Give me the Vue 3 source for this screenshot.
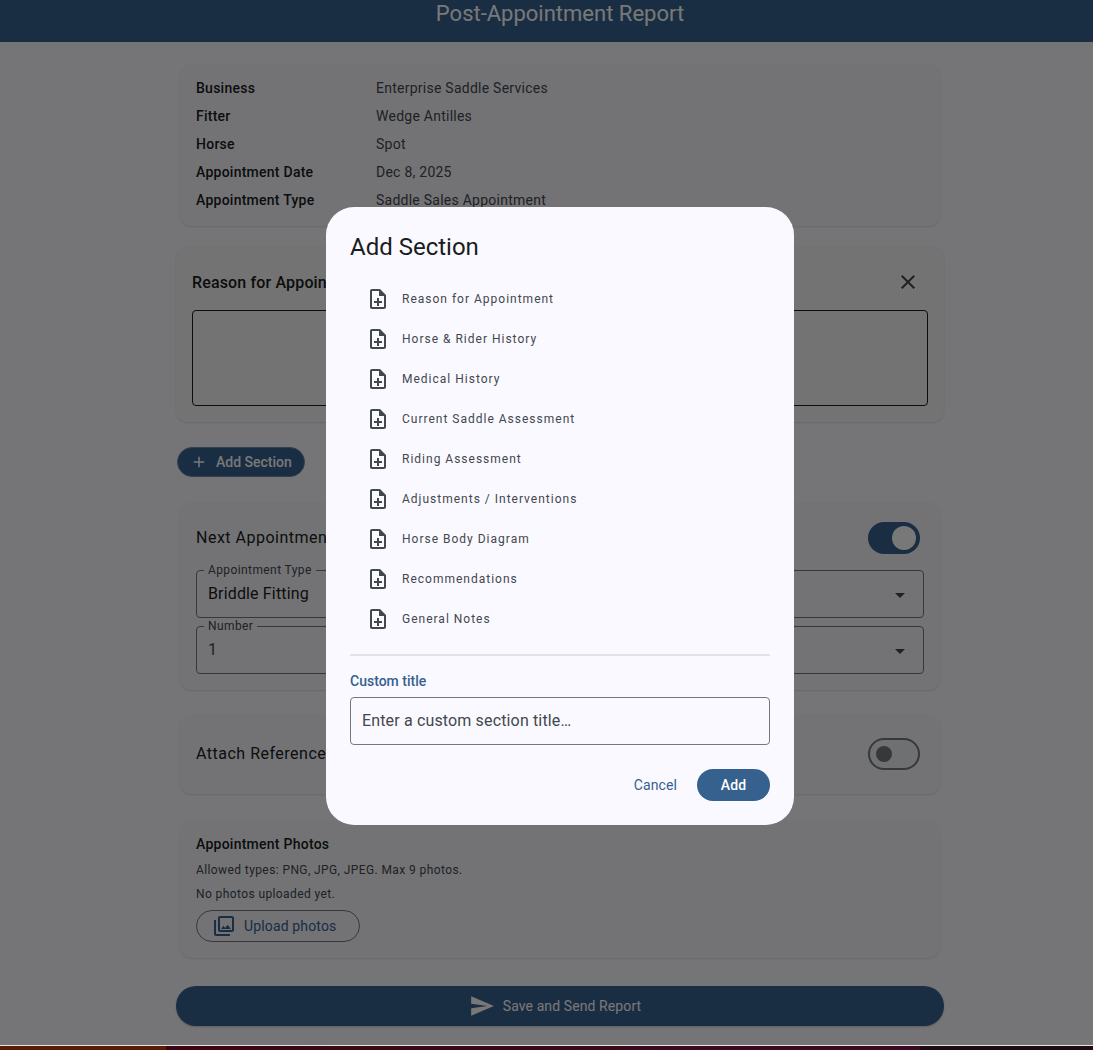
<script setup>
const info = [
  ['Business', 'Enterprise Saddle Services'],
  ['Fitter', 'Wedge Antilles'],
  ['Horse', 'Spot'],
  ['Appointment Date', 'Dec 8, 2025'],
  ['Appointment Type', 'Saddle Sales Appointment'],
]
const sections = [
  'Reason for Appointment',
  'Horse & Rider History',
  'Medical History',
  'Current Saddle Assessment',
  'Riding Assessment',
  'Adjustments / Interventions',
  'Horse Body Diagram',
  'Recommendations',
  'General Notes',
]
</script>

<template>
  <div class="page">
    <header class="bar">
      <h1>Post-Appointment Report</h1>
    </header>
    <main class="column">
      <section class="card info">
        <div v-for="row in info" :key="row[0]" class="info-row">
          <span class="info-key">{{ row[0] }}</span>
          <span class="info-val">{{ row[1] }}</span>
        </div>
      </section>

      <section class="note">
        <div class="note-head">
          <span class="note-title">Reason for Appointment</span>
          <svg class="close" viewBox="0 0 24 24"><path d="M19 6.41 17.59 5 12 10.59 6.41 5 5 6.41 10.59 12 5 17.59 6.41 19 12 13.41 17.59 19 19 17.59 13.41 12z" /></svg>
        </div>
        <div class="note-box"></div>
      </section>

      <button class="add-btn">
        <svg viewBox="0 0 24 24"><path d="M19 13h-6v6h-2v-6H5v-2h6V5h2v6h6v2z" /></svg>
        <span>Add Section</span>
      </button>

      <section class="card next">
        <div class="switch-row">
          <span class="row-title">Next Appointment</span>
          <span class="switch on"><i></i></span>
        </div>
        <div class="fields">
          <fieldset class="field"><legend>Appointment Type</legend><span>Briddle Fitting</span></fieldset>
          <fieldset class="field right"><legend>Unit</legend><svg viewBox="0 0 24 24"><path d="M7 10l5 5 5-5z" /></svg></fieldset>
          <fieldset class="field"><legend>Number</legend><span class="dim">1</span></fieldset>
          <fieldset class="field right"><legend>Period</legend><svg viewBox="0 0 24 24"><path d="M7 10l5 5 5-5z" /></svg></fieldset>
        </div>
      </section>

      <section class="card attach">
        <span class="row-title">Attach Reference</span>
        <span class="switch off"><i></i></span>
      </section>

      <section class="card photos">
        <h2>Appointment Photos</h2>
        <p>Allowed types: PNG, JPG, JPEG. Max 9 photos.</p>
        <p>No photos uploaded yet.</p>
        <button class="upload">
          <svg viewBox="0 0 24 24"><path d="M20 4v12H8V4h12m0-2H8c-1.1 0-2 .9-2 2v12c0 1.1.9 2 2 2h12c1.1 0 2-.9 2-2V4c0-1.1-.9-2-2-2zm-8.5 9.67 1.69 2.26 2.48-3.1L19 15H9zM2 6v14c0 1.1.9 2 2 2h14v-2H4V6H2z" /></svg>
          <span>Upload photos</span>
        </button>
      </section>

      <button class="send">
        <svg viewBox="0 0 24 24"><path d="M2.01 21 23 12 2.01 3 2 10l15 2-15 2z" /></svg>
        <span>Save and Send Report</span>
      </button>
    </main>

    <div class="scrim">
      <div class="dialog">
        <h3>Add Section</h3>
        <ul>
          <li v-for="s in sections" :key="s">
            <svg viewBox="0 0 24 24"><path d="M13 11h-2v3H8v2h3v3h2v-3h3v-2h-3zm1-9H6c-1.1 0-2 .9-2 2v16c0 1.1.89 2 1.99 2H18c1.1 0 2-.9 2-2V8l-6-6zm4 18H6V4h7v5h5v11z" /></svg>
            <span>{{ s }}</span>
          </li>
        </ul>
        <hr />
        <label>Custom title</label>
        <div class="input">Enter a custom section title…</div>
        <div class="actions">
          <button class="cancel">Cancel</button>
          <button class="confirm">Add</button>
        </div>
      </div>
    </div>
    <div class="strip"></div>
  </div>
</template>

<style>
html, body { margin: 0; overflow: hidden; background: #f8f9ff; }
</style>

<style scoped>
.page {
  position: relative;
  width: 1120px;
  height: 1050px;
  overflow: hidden;
  background: #f8f9ff;
  font-family: Roboto, "Liberation Sans", sans-serif;
  color: #191c20;
}
.bar {
  height: 42px;
  background: #36618e;
  color: #fff;
  text-align: center;
}
.bar h1 {
  margin: 0;
  font-size: 22px;
  font-weight: 400;
  line-height: 27px;
  color: #fff;
}
.column {
  width: 768px;
  margin: 0 auto;
  display: flex;
  flex-direction: column;
  align-items: stretch;
}
.card {
  margin: 0 4px;
  background: #f4f5fa;
  border-radius: 12px;
  box-shadow: 0 1px 2px rgba(0, 0, 0, .12);
  box-sizing: border-box;
  padding: 0 16px;
}
.info {
  margin-top: 22px;
  height: 162px;
  padding-top: 10px;
}
.info-row {
  display: flex;
  height: 28px;
  align-items: center;
  font-size: 14px;
  letter-spacing: .25px;
}
.info-key { width: 180px; font-weight: 500; }
.info-val { color: #43474e; }
.note {
  margin-top: 20px;
  height: 176px;
  padding: 16px;
  box-sizing: border-box;
  background: #f5f5f5;
  border-radius: 12px;
  box-shadow: 0 1px 2px rgba(0, 0, 0, .12);
}
.note-head {
  display: flex;
  justify-content: space-between;
  align-items: center;
  height: 40px;
  margin-bottom: 8px;
}
.note-title { font-size: 16px; font-weight: 500; letter-spacing: .15px; }
.close { width: 24px; height: 24px; fill: #43474e; margin-right: 8px; }
.note-box {
  height: 96px;
  box-sizing: border-box;
  border: 1px solid #191c20;
  border-radius: 4px;
}
.add-btn {
  align-self: flex-start;
  margin: 25px 0 0 1px;
  height: 30px;
  width: 128px;
  padding: 0 0 0 12px;
  display: flex;
  align-items: center;
  gap: 8px;
  border: 1px solid #6d87a8;
  border-radius: 15px;
  background: #36618e;
  color: #fff;
  font: 500 14px Roboto, sans-serif;
}
.add-btn svg { width: 18px; height: 18px; fill: #fff; }
.next {
  margin-top: 25px;
  height: 188px;
  padding-top: 20px;
}
.switch-row, .attach {
  display: flex;
  justify-content: space-between;
  align-items: center;
}
.switch-row { height: 32px; }
.row-title { font-size: 16px; letter-spacing: .5px; margin-top: -2px; }
.switch {
  width: 52px;
  height: 32px;
  margin-right: 4px;
  box-sizing: border-box;
  border-radius: 16px;
  display: flex;
  align-items: center;
}
.switch.on {
  background: #36618e;
  justify-content: flex-end;
  padding-right: 4px;
}
.switch.on i { width: 24px; height: 24px; border-radius: 50%; background: #fff; }
.switch.off {
  border: 2px solid #73777f;
  background: #ecedf2;
  padding-left: 6px;
}
.switch.off i { width: 16px; height: 16px; border-radius: 50%; background: #73777f; }
.fields {
  margin-top: 10px;
  display: grid;
  grid-template-columns: 1fr 1fr;
  column-gap: 16px;
  row-gap: 2px;
}
.field {
  margin: 0;
  height: 54px;
  min-width: 0;
  padding: 0 11px;
  box-sizing: border-box;
  border: 1px solid #73777f;
  border-radius: 4px;
  display: flex;
  align-items: center;
  justify-content: space-between;
  font-size: 16px;
  letter-spacing: .15px;
}
.field legend {
  padding: 0 4px;
  margin-left: -4px;
  font-size: 12px;
  line-height: 12px;
  letter-spacing: .4px;
  color: #43474e;
}
.field span { display: block; margin-top: -6px; }
.field .dim { color: #43474e; }
.field.right { justify-content: flex-end; padding-right: 11px; }
.field svg { width: 24px; height: 24px; fill: #43474e; margin-top: -4px; }
.attach {
  margin-top: 24px;
  height: 80px;
}
.photos {
  margin-top: 26px;
  height: 138px;
  padding-top: 14px;
}
.photos h2 {
  margin: 0;
  font-size: 14px;
  line-height: 20px;
  font-weight: 500;
  letter-spacing: .25px;
}
.photos p {
  margin: 6px 0 0;
  font-size: 12px;
  line-height: 18px;
  letter-spacing: .4px;
  color: #43474e;
}
.photos h2 + p { margin-top: 7px; }
.upload {
  margin-top: 7px;
  width: 164px;
  height: 32px;
  padding: 0 0 0 15px;
  display: flex;
  align-items: center;
  gap: 8px;
  background: transparent;
  border: 1px solid #73777f;
  border-radius: 16px;
  color: #36618e;
  font: 400 14px Roboto, sans-serif;
  letter-spacing: .15px;
}
.upload svg { width: 24px; height: 24px; fill: #36618e; }
.send {
  margin-top: 28px;
  height: 40px;
  display: flex;
  justify-content: center;
  align-items: center;
  gap: 8px;
  padding: 0 10px 0 0;
  border: 0;
  border-radius: 20px;
  background: #36618e;
  color: #fff;
  font: 400 14px Roboto, sans-serif;
  letter-spacing: .1px;
  box-shadow: 0 1px 2px rgba(0, 0, 0, .2);
}
.send svg { width: 26px; height: 26px; fill: #fff; }
.strip {
  position: absolute;
  left: 0;
  right: 0;
  top: 1045px;
  height: 5px;
  box-sizing: border-box;
  border-top: 1px solid #e8e4e4;
  background: linear-gradient(90deg, #5a1c08 166px, #3a0510 166px, #3a0a20 920px, #1c0a10 920px);
}
.scrim {
  position: absolute;
  inset: 0;
  background: rgba(0, 0, 0, .53);
  display: flex;
  justify-content: center;
  align-items: flex-start;
  padding-top: 207px;
  box-sizing: border-box;
}
.dialog {
  width: 468px;
  height: 618px;
  box-sizing: border-box;
  padding: 24px;
  background: #faf9ff;
  border-radius: 28px;
}
.dialog h3 {
  margin: 0;
  font-size: 24px;
  line-height: 32px;
  font-weight: 400;
}
.dialog ul {
  list-style: none;
  margin: 16px 0 0;
  padding: 0;
}
.dialog li {
  height: 40px;
  display: flex;
  align-items: center;
  padding-left: 16px;
  gap: 12px;
  font-size: 12px;
  letter-spacing: 1px;
  color: #43474e;
}
.dialog li svg { width: 24px; height: 24px; fill: #43474e; }
.dialog hr {
  margin: 15px 0 0;
  border: 0;
  height: 2px;
  background: #e0e2ec;
}
.dialog label {
  display: block;
  margin-top: 15px;
  font-size: 14px;
  line-height: 20px;
  font-weight: 500;
  color: #36618e;
}
.input {
  margin-top: 6px;
  height: 48px;
  box-sizing: border-box;
  padding: 0 11px 2px;
  display: flex;
  align-items: center;
  border: 1px solid #73777f;
  border-radius: 4px;
  font-size: 16px;
  letter-spacing: .15px;
  color: #43474e;
}
.actions {
  margin-top: 24px;
  display: flex;
  justify-content: flex-end;
  align-items: center;
  gap: 20px;
}
.actions button {
  border: 0;
  background: transparent;
  font: 500 14px Roboto, sans-serif;
  letter-spacing: .1px;
  padding: 0;
  height: 32px;
}
.actions .cancel { color: #36618e; font-weight: 400; }
.actions .confirm {
  width: 73px;
  background: #36618e;
  color: #fff;
  border-radius: 16px;
}
</style>
